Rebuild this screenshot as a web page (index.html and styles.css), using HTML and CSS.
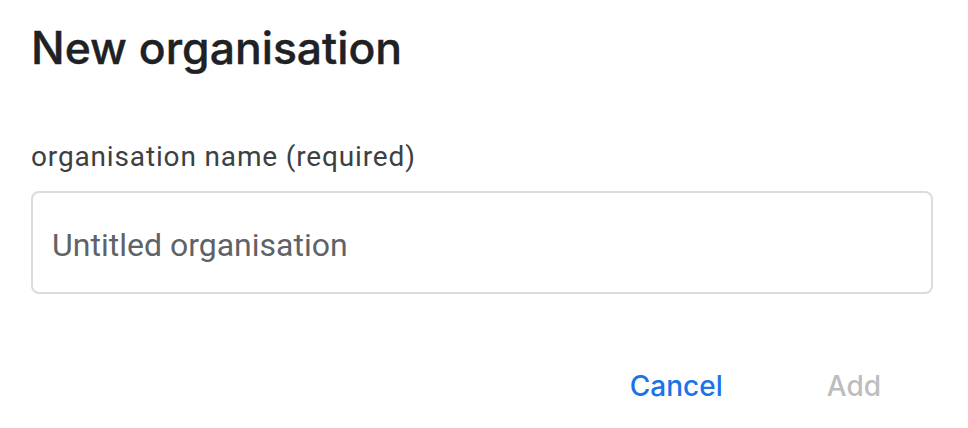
FILE: index.html
```html
<!DOCTYPE html>
<html>
<head>
<meta charset="utf-8">
<link rel="stylesheet" href="styles.css">
</head>
<body>
<div class="dialog">
  <h1 class="title">New organisation</h1>
  <label class="label" for="org">organisation name (required)</label>
  <div class="field">
    <input id="org" class="input" type="text" placeholder="Untitled organisation">
  </div>
  <div class="actions">
    <button class="btn btn-cancel">Cancel</button>
    <button class="btn btn-add" disabled>Add</button>
  </div>
</div>
</body>
</html>
```

FILE: styles.css
```css
html, body {
  margin: 0;
  padding: 0;
  background: #ffffff;
}
.dialog {
  width: 968px;
  height: 428px;
  box-sizing: border-box;
  padding: 20px 35px 0 31px;
  display: flex;
  flex-direction: column;
}
.title {
  margin: 0;
  font-family: Inter, "Open Sans", sans-serif;
  font-weight: 500;
  font-size: 44.5px;
  line-height: 56px;
  color: #202124;
  letter-spacing: 0;
  -webkit-text-stroke: 0.4px #202124;
}
.label {
  margin-top: 63px;
  font-family: Roboto, sans-serif;
  font-size: 28px;
  line-height: 36px;
  color: #3c4043;
  letter-spacing: 0.85px;
}
.field {
  margin-top: 16px;
  height: 103px;
  border: 2px solid #dadce0;
  border-radius: 8px;
  box-sizing: border-box;
  display: flex;
  align-items: center;
  padding: 4px 19px 0;
}
.input {
  border: none;
  outline: none;
  background: transparent;
  width: 100%;
  font-family: Roboto, sans-serif;
  font-size: 32px;
  color: #5f6368;
  padding: 0;
}
.input::placeholder {
  color: #5f6368;
  opacity: 1;
}
.actions {
  margin-top: 67px;
  display: flex;
  justify-content: flex-end;
  padding-right: 52px;
}
.btn {
  border: none;
  background: transparent;
  font-family: Inter, "Open Sans", sans-serif;
  font-weight: 500;
  font-size: 28px;
  padding: 8px 0;
  cursor: pointer;
}
.btn-cancel {
  color: #1a73e8;
  margin-right: 104px;
}
.btn-add {
  color: #bdbdbd;
}
```
